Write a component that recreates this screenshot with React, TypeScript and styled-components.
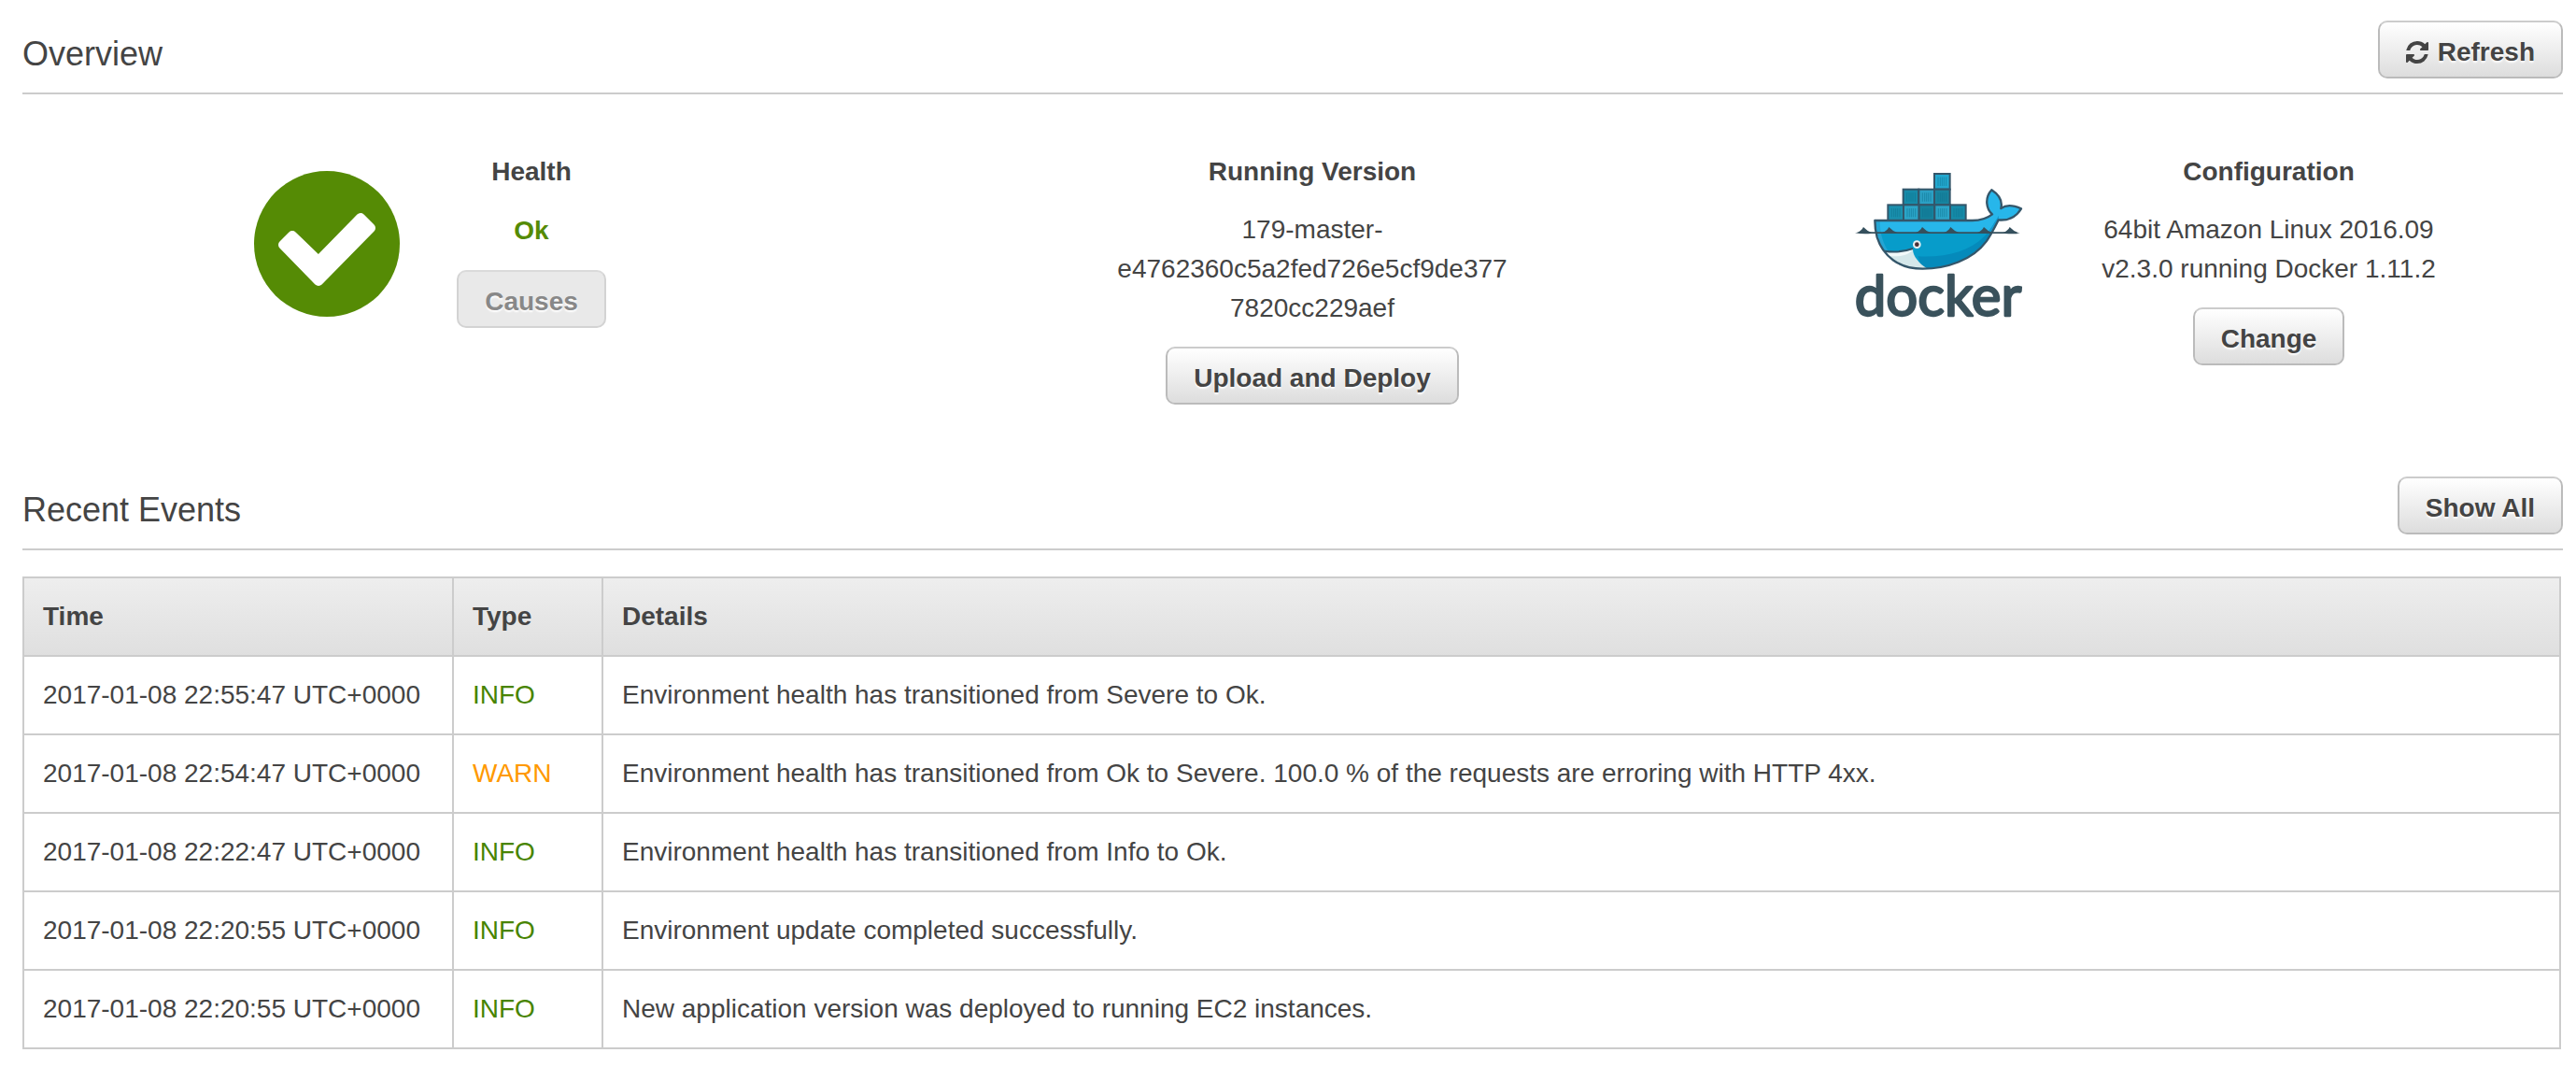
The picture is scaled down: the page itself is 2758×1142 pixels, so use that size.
import React from 'react';
import styled, { createGlobalStyle } from 'styled-components';

const GlobalStyle = createGlobalStyle`
  *, *::before, *::after {
    box-sizing: border-box;
  }

  body {
    margin: 0;
    background: #fff;
    color: #444;
    font-family: "Liberation Sans", Arial, Helvetica, sans-serif;
    font-size: 28px;
    line-height: 42px;
  }
`;

const Page = styled.main`
  padding: 22px 14px 16px 24px;
`;

const SectionHeader = styled.header`
  display: flex;
  align-items: center;
  justify-content: space-between;
  padding-bottom: 15px;
  border-bottom: 2px solid #ccc;
`;

const SectionTitle = styled.h2`
  margin: 0;
  padding-top: 10px;
  font-size: 36px;
  font-weight: 400;
  line-height: 42px;
`;

const Button = styled.button`
  display: inline-flex;
  align-items: center;
  justify-content: center;
  gap: 10px;
  padding: 12px 28px 6px;
  border: 2px solid #bbb;
  border-top-color: #ccc;
  border-radius: 10px;
  background: linear-gradient(#fff, #ddd) padding-box;
  color: #444;
  font: inherit;
  font-weight: 700;
  line-height: 40px;
  text-shadow: 0 2px 2px #fff;
  white-space: nowrap;
  cursor: pointer;

  &:disabled {
    border-color: #d3d3d3;
    border-top-color: #dadada;
    background: #e9e9e9;
    color: #888;
    cursor: default;
  }
`;

const RefreshGlyph = styled.svg`
  width: 24px;
  height: 24px;
  fill: currentColor;
`;

const Summary = styled.div`
  display: grid;
  grid-template-columns: 447fr 487fr 426fr;
  align-items: start;
  padding: 62px 0 77px;
`;

const Panel = styled.section`
  display: flex;
  align-items: flex-start;
  justify-content: center;
  gap: 40px;
`;

const PanelBody = styled.div<{ $width: number }>`
  display: flex;
  flex-direction: column;
  align-items: center;
  width: ${({ $width }) => $width}px;
  text-align: center;
`;

const PanelTitle = styled.h3`
  margin: 0 0 20px;
  font-size: 28px;
  line-height: 42px;
`;

const PanelText = styled.p`
  max-width: 424px;
  margin: 0 0 20px;
  overflow-wrap: anywhere;
`;

const Status = styled.p`
  margin: 0 0 20px;
  color: #558b05;
  font-weight: 700;
  line-height: 44px;
`;

const Artwork = styled.svg<{ $width: number }>`
  flex: none;
  width: ${({ $width }) => $width}px;
  height: 160px;
  margin-top: 19px;
  overflow: visible;
`;

const EventTable = styled.table`
  width: calc(100% - 2px);
  margin-top: 28px;
  border-collapse: collapse;
  table-layout: fixed;
  text-align: left;

  thead {
    background: linear-gradient(#eee, #dfdfdf);
  }
`;

const Column = styled.col<{ $width?: number }>`
  width: ${({ $width }) => ($width ? `${$width}px` : 'auto')};
`;

const HeadCell = styled.th`
  padding: 20px;
  border: 2px solid #ccc;
  font-weight: 700;
`;

type Level = 'INFO' | 'WARN';

const Cell = styled.td<{ $level?: Level }>`
  padding: 20px;
  border: 2px solid #ccc;
  color: ${({ $level }) =>
    $level === 'INFO' ? '#488400' : $level === 'WARN' ? '#ff9900' : 'inherit'};
`;

interface EnvironmentEvent {
  time: string;
  level: Level;
  details: string;
}

const events: EnvironmentEvent[] = [
  {
    time: '2017-01-08 22:55:47 UTC+0000',
    level: 'INFO',
    details: 'Environment health has transitioned from Severe to Ok.',
  },
  {
    time: '2017-01-08 22:54:47 UTC+0000',
    level: 'WARN',
    details:
      'Environment health has transitioned from Ok to Severe. 100.0 % of the requests are erroring with HTTP 4xx.',
  },
  {
    time: '2017-01-08 22:22:47 UTC+0000',
    level: 'INFO',
    details: 'Environment health has transitioned from Info to Ok.',
  },
  {
    time: '2017-01-08 22:20:55 UTC+0000',
    level: 'INFO',
    details: 'Environment update completed successfully.',
  },
  {
    time: '2017-01-08 22:20:55 UTC+0000',
    level: 'INFO',
    details: 'New application version was deployed to running EC2 instances.',
  },
];

const RefreshIcon = () => (
  <RefreshGlyph viewBox="0 0 1536 1536" aria-hidden="true">
    <path d="M1511 928q0 5-1 7-64 268-268 434.5t-478 166.5q-146 0-282.5-55t-243.5-157l-129 129q-19 19-45 19t-45-19-19-45v-448q0-26 19-45t45-19h448q26 0 45 19t19 45-19 45l-137 137q71 66 161 102t187 36q134 0 250-65t186-179q11-17 53-117 8-23 30-23h192q13 0 22.5 9.5t9.5 22.5zm25-800v448q0 26-19 45t-45 19h-448q-26 0-45-19t-19-45 19-45l138-138q-148-137-349-137-134 0-250 65t-186 179q-11 17-53 117-8 23-30 23h-199q-13 0-22.5-9.5t-9.5-22.5v-7q65-268 270-434.5t480-166.5q146 0 284 55.5t245 156.5l130-129q19-19 45-19t45 19 19 45z" />
  </RefreshGlyph>
);

const HealthBadge = () => (
  <Artwork $width={156} viewBox="0 0 156 160" role="img" aria-label="Healthy">
    <circle cx="78" cy="79" r="78" fill="#558b05" />
    <path
      d="M31 80L41 70L69 97L114 51L125 62L69 119Z"
      fill="#fff"
      stroke="#fff"
      strokeWidth="10"
      strokeLinejoin="round"
    />
  </Artwork>
);

// Cargo boxes: left, top and fill of each one
const boxes: [number, number, string][] = [
  [333, 81, '#23a8cf'],
  [233, 131, '#168ba9'],
  [283, 131, '#2ba0c4'],
  [333, 131, '#17849f'],
  [184, 181, '#1a90ae'],
  [234, 181, '#2ba5c8'],
  [284, 181, '#14819c'],
  [334, 181, '#2ba5c8'],
  [384, 181, '#168ba9'],
];

const crests = [108, 190, 297, 388, 495, 578];

const hull =
  'M142 231H455C485 231 505 222 519 211C500 194 493 160 517 133C543 150 553 168 547 192C565 179 592 184 612 193C595 222 566 232 539 229C526 255 516 276 500 298C456 358 372 386 295 386C220 386 168 346 149 285C144 266 142 250 142 231Z';

const DockerLogo = () => (
  <Artwork $width={182} viewBox="72 69 546 480" role="img" aria-label="Docker">
    <defs>
      <clipPath id="hull">
        <path d={hull} />
      </clipPath>
    </defs>
    {boxes.map(([x, y, fill]) => (
      <g key={`${x}-${y}`}>
        <rect x={x} y={y} width="50" height="50" fill={fill} stroke="#34566a" strokeWidth="6" />
        <path
          d={`M${x + 12} ${y + 11}v28M${x + 19} ${y + 11}v28M${x + 25} ${y + 11}v28M${x + 31} ${y + 11}v28M${x + 38} ${y + 11}v28`}
          stroke="#0d6f8c"
          strokeOpacity="0.5"
          strokeWidth="3"
        />
      </g>
    ))}
    <g clipPath="url(#hull)">
      <rect x="130" y="120" width="490" height="280" fill="#27b6ea" />
      <path d="M130 270H530V400H130Z" fill="#079cca" />
      <path d="M130 231H158C158 290 180 330 200 345L150 345Z" fill="#24a5d4" />
      <path d="M530 231C490 310 410 352 280 346L300 400H530Z" fill="#058abb" />
      <path d="M530 231C522 246 513 259 505 270H540V215Z" fill="#149bd0" />
      <path d="M170 331C205 335 240 331 264 324C264 345 285 370 308 384L290 400L200 380Z" fill="#d4e7ea" />
      <path d="M170 331C205 335 240 331 264 324C250 345 215 348 185 345Z" fill="#f2f9fa" />
    </g>
    <path d="M172 329C205 334 240 330 264 321" fill="none" stroke="#34566a" strokeWidth="6" />
    <path d={hull} fill="none" stroke="#34566a" strokeWidth="7" strokeLinejoin="round" />
    <path d="M78 271Q100 266 130 268H560Q590 266 608 272Q590 275 560 273H130Q100 275 78 271Z" fill="#35505d" />
    {crests.map((x) => (
      <path
        key={x}
        d={`M${x - 24} 270Q${x - 9} 264 ${x - 3} 252Q${x + 8} 264 ${x + 24} 270Z`}
        fill="#35505d"
      />
    ))}
    <circle cx="277" cy="308" r="13" fill="#e8f0f2" />
    <circle cx="277" cy="308" r="7" fill="#4a2d33" />
    <text
      x="345"
      y="536"
      textAnchor="middle"
      fontFamily="Lato, sans-serif"
      fontSize="180"
      fill="#3a525c"
      stroke="#3a525c"
      strokeWidth="7"
      strokeLinejoin="round"
    >
      docker
    </text>
  </Artwork>
);

export default function App() {
  return (
    <>
      <GlobalStyle />
      <Page>
        <SectionHeader>
          <SectionTitle>Overview</SectionTitle>
          <Button type="button">
            <RefreshIcon />
            Refresh
          </Button>
        </SectionHeader>

        <Summary>
          <Panel>
            <HealthBadge />
            <PanelBody $width={202}>
              <PanelTitle>Health</PanelTitle>
              <Status>Ok</Status>
              <Button type="button" disabled>
                Causes
              </Button>
            </PanelBody>
          </Panel>
          <Panel>
            <PanelBody $width={446}>
              <PanelTitle>Running Version</PanelTitle>
              <PanelText>179-master-e4762360c5a2fed726e5cf9de3777820cc229aef</PanelText>
              <Button type="button">Upload and Deploy</Button>
            </PanelBody>
          </Panel>
          <Panel>
            <DockerLogo />
            <PanelBody $width={446}>
              <PanelTitle>Configuration</PanelTitle>
              <PanelText>64bit Amazon Linux 2016.09 v2.3.0 running Docker 1.11.2</PanelText>
              <Button type="button">Change</Button>
            </PanelBody>
          </Panel>
        </Summary>

        <SectionHeader>
          <SectionTitle>Recent Events</SectionTitle>
          <Button type="button">Show All</Button>
        </SectionHeader>

        <EventTable>
          <colgroup>
            <Column $width={460} />
            <Column $width={160} />
            <Column />
          </colgroup>
          <thead>
            <tr>
              <HeadCell scope="col">Time</HeadCell>
              <HeadCell scope="col">Type</HeadCell>
              <HeadCell scope="col">Details</HeadCell>
            </tr>
          </thead>
          <tbody>
            {events.map((event, index) => (
              <tr key={index}>
                <Cell>{event.time}</Cell>
                <Cell $level={event.level}>{event.level}</Cell>
                <Cell>{event.details}</Cell>
              </tr>
            ))}
          </tbody>
        </EventTable>
      </Page>
    </>
  );
}
